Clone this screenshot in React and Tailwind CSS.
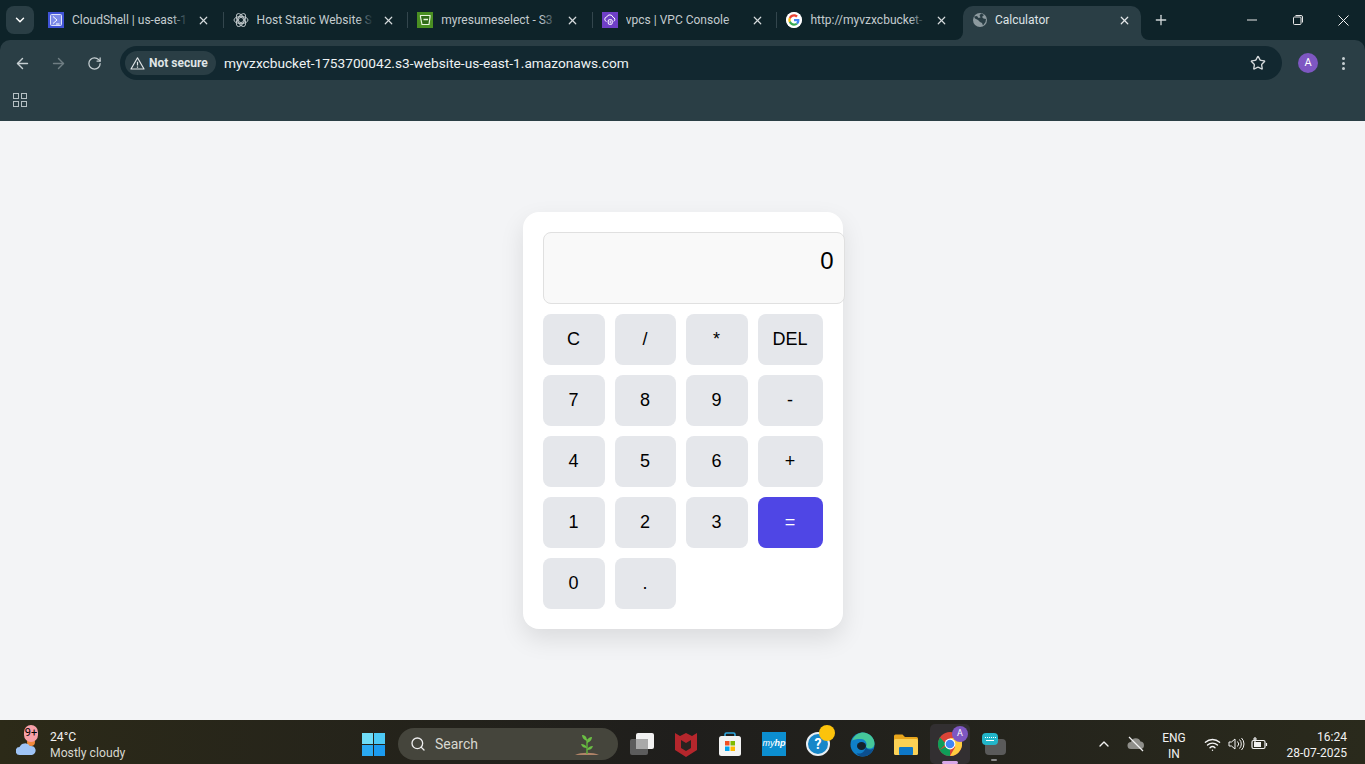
import React from 'react';
import { ChevronDown, ChevronUp, X, Plus, ArrowLeft, ArrowRight, RotateCw, Star, Search, Wifi } from 'lucide-react';

const GoogleIcon = () => (
  <svg width="16" height="16" viewBox="0 0 48 48" className="rounded-full bg-white">
    <circle cx="24" cy="24" r="24" fill="#fff" />
    <g transform="translate(7 7) scale(0.71)">
      <path fill="#EA4335" d="M24 9.5c3.5 0 6.6 1.2 9.1 3.6l6.8-6.8C35.8 2.4 30.4 0 24 0 14.6 0 6.5 5.4 2.6 13.2l7.9 6.2C12.4 13.7 17.7 9.5 24 9.5z" />
      <path fill="#4285F4" d="M46.9 24.5c0-1.6-.1-3.1-.4-4.5H24v9h12.9c-.6 3-2.2 5.5-4.7 7.2l7.7 6c4.5-4.2 7-10.300 7-17.700z" />
      <path fill="#FBBC05" d="M10.500 28.600c-.5-1.500-.8-3-.8-4.600s.3-3.100.8-4.600l-7.900-6.200C.9 16.500 0 20.100 0 24s.9 7.500 2.600 10.800l7.900-6.200z" />
      <path fill="#34A853" d="M24 48c6.500 0 11.900-2.100 15.900-5.800l-7.700-6c-2.200 1.400-4.900 2.300-8.200 2.300-6.300 0-11.600-4.200-13.500-9.900l-7.900 6.200C6.500 42.600 14.600 48 24 48z" />
    </g>
  </svg>
);

const CloudShellIcon = () => (
  <svg width="16" height="16" viewBox="0 0 16 16">
    <rect width="16" height="16" fill="#4053d6" />
    <rect x="2.500" y="2.500" width="11" height="11" rx="1" fill="#7d8be8" stroke="#dfe3fa" strokeWidth="1" />
    <path d="M5 4.500 9 8l-4 3.500M8 12h3.500" fill="none" stroke="#fff" strokeWidth="1" />
  </svg>
);

const OpenAiIcon = () => (
  <svg width="16" height="16" viewBox="0 0 16 16" fill="none" stroke="#c9d0d3" strokeWidth="0.900">
    <circle cx="8" cy="8" r="2.600" />
    <ellipse cx="8" cy="8" rx="7" ry="3.600" />
    <ellipse cx="8" cy="8" rx="7" ry="3.600" transform="rotate(60 8 8)" />
    <ellipse cx="8" cy="8" rx="7" ry="3.600" transform="rotate(120 8 8)" />
  </svg>
);

const S3Icon = () => (
  <svg width="16" height="16" viewBox="0 0 16 16">
    <rect width="16" height="16" fill="#4a8f22" />
    <path d="M3.500 3.500h9.500v1.500l-1 7.500H5L3.500 5z" fill="#2f6a17" stroke="#e8f5dc" strokeWidth="1.200" />
    <path d="M6.500 7.500H11" stroke="#e8f5dc" strokeWidth="1.500" />
  </svg>
);

const VpcIcon = () => (
  <svg width="16" height="16" viewBox="0 0 16 16">
    <rect width="16" height="16" fill="#6f3fc7" />
    <path d="M4.500 9.500a2.300 2.300 0 0 1 .2-4.500 3.300 3.300 0 0 1 6.300.4 2.100 2.100 0 0 1 .6 4" fill="none" stroke="#fff" strokeWidth="1" />
    <rect x="6.200" y="7.500" width="4" height="5" rx="1.500" fill="none" stroke="#fff" strokeWidth="1" />
    <path d="M8.200 8.500v3" stroke="#fff" strokeWidth="1" />
  </svg>
);

const GlobeIcon = () => (
  <svg width="16" height="16" viewBox="0 0 16 16">
    <circle cx="8" cy="8" r="7" fill="#8d9a9f" />
    <path d="M2 4.500 5 4l1.500 2 2-.5L7.500 3l2-1.500L12 3l-2 2 1.500 1.500 2.500.5-.5 3-2.500 3.500-1-2.500-2-1L6 8 3 6.500z" fill="#2a3e45" />
  </svg>
);

const tabs = [
  { title: 'CloudShell | us-east-1', icon: <CloudShellIcon /> },
  { title: 'Host Static Website S', icon: <OpenAiIcon /> },
  { title: 'myresumeselect - S3', icon: <S3Icon /> },
  { title: 'vpcs | VPC Console', icon: <VpcIcon /> },
  { title: 'http://myvzxcbucket-', icon: <GoogleIcon />, last: true },
];

const keys = [
  ['C', '/', '*', 'DEL'],
  ['7', '8', '9', '-'],
  ['4', '5', '6', '+'],
  ['1', '2', '3', '='],
  ['0', '.'],
];

const Tab = ({ title, icon, last }) => (
  <div className="relative flex h-[34px] w-[184.6px] shrink-0 items-center pb-[6px] pl-2">
    {icon}
    <div className="relative ml-2 w-[116px] overflow-hidden whitespace-nowrap text-xs text-[#c4cccf]">
      {title}
      <div className="absolute inset-y-0 right-0 w-4 bg-gradient-to-r from-transparent to-[#0e2329]" />
    </div>
    <X size={13} strokeWidth={2.200} className="ml-[9px] text-[#d5dadc]" />
    {!last && <div className="absolute right-[1px] top-[6px] h-4 w-px bg-[#33464d]" />}
  </div>
);

const Key = ({ label }) => {
  const isEquals = label === '=';
  return (
    <button
      className={`flex h-[51px] items-center justify-center rounded-lg pb-[2px] text-lg ${
        isEquals ? 'bg-[#4f46e5] text-white' : 'bg-[#e5e7eb] text-black'
      }`}
    >
      {label}
    </button>
  );
};

const Slot = ({ children }) => (
  <div className="flex h-10 w-11 shrink-0 items-center justify-center">{children}</div>
);

const TaskbarIcons = () => (
  <div className="flex items-center">
    <Slot>
      <svg width="26" height="26" viewBox="0 0 26 26">
        <rect x="1" y="8" width="18" height="16" rx="2" fill="#5c5c5c" />
        <rect x="7" y="2" width="18" height="16" rx="2" fill="#f1f1f1" />
        <rect x="7" y="8" width="12" height="10" fill="#a9a9a9" />
      </svg>
    </Slot>
    <Slot>
      <svg width="24" height="26" viewBox="0 0 24 26">
        <path d="M1 2l5 3 6-3 6 3 5-3v17l-11 7-11-7z" fill="#b5262c" />
        <path d="M7 9l5 3 5-3v8l-5 3-5-3z" fill="#2a2320" />
      </svg>
    </Slot>
    <Slot>
      <svg width="24" height="26" viewBox="0 0 24 26">
        <path d="M7 6V3.500A1.500 1.500 0 0 1 8.500 2h7A1.500 1.500 0 0 1 17 3.500V6" fill="none" stroke="#2fa8e0" strokeWidth="1.600" />
        <rect x="1" y="5" width="22" height="20" rx="2.500" fill="#f3f3f3" />
        <rect x="7" y="10" width="4.500" height="4.500" fill="#f25022" />
        <rect x="12.500" y="10" width="4.500" height="4.500" fill="#7fba00" />
        <rect x="7" y="15.500" width="4.500" height="4.500" fill="#00a4ef" />
        <rect x="12.500" y="15.500" width="4.500" height="4.500" fill="#ffb900" />
      </svg>
    </Slot>
    <Slot>
      <div className="flex h-6 w-6 items-center justify-center bg-[#0c8ed0] font-['Liberation_Sans',sans-serif] text-[9px] italic text-white">
        my<span className="font-bold">hp</span>
      </div>
    </Slot>
    <Slot>
      <div className="relative h-6 w-6">
        <div className="flex h-6 w-6 items-center justify-center rounded-full border-2 border-[#e8eef2] bg-[#1687c9] text-sm font-bold text-white">?</div>
        <div className="absolute -right-[5px] -top-[7px] h-4 w-4 rounded-full bg-[#fcc30b]" />
      </div>
    </Slot>
    <Slot>
      <svg width="25" height="25" viewBox="0 0 25 25">
        <circle cx="12.500" cy="12.500" r="12" fill="#0f7fc9" />
        <path d="M2 9C4 2.500 10 .500 13 .500c6 0 11.500 5 11.500 11 0 3-2 5-5 5-2.500 0-3.500-1-3.500-2 2-3-1-8-5.500-7.500C7 7 3 7.500 2 9z" fill="#45c79a" />
        <path d="M16 14.500c0 1.500 1.500 3 4 3 1.500 0 2.500-.5 3.500-1-1.500 5-6 8-11 8-3 0-5-1.500-6-3.500 3 1.500 8 .5 9.500-6.500z" fill="#0c4f8f" />
        <ellipse cx="11.500" cy="14" rx="4.500" ry="4" fill="#14202c" />
      </svg>
    </Slot>
    <Slot>
      <svg width="24" height="24" viewBox="0 0 24 24">
        <path d="M0 4a1.500 1.500 0 0 1 1.500-1.500h7L11 5h11.500A1.500 1.500 0 0 1 24 6.500V10H0z" fill="#e9a61c" />
        <rect y="7" width="24" height="16" rx="1.500" fill="#fbd155" />
        <rect x="5" y="15" width="14" height="8" rx="1" fill="#0e78c8" />
      </svg>
    </Slot>
    <div className="flex h-10 w-11 shrink-0 items-center justify-center">
      <div className="relative flex h-10 w-10 items-center justify-center rounded-[5px] bg-[#322f31]">
        <svg width="24" height="24" viewBox="0 0 24 24">
          <circle cx="12" cy="12" r="12" fill="#db4437" />
          <path d="M12 12 1.600 18A12 12 0 0 0 12 24z" fill="#0f9d58" />
          <path d="M1.600 18A12 12 0 0 1 2 5.500L8 12z" fill="#0f9d58" />
          <path d="M12 6h10.400A12 12 0 0 1 12 24l5.200-9z" fill="#ffcd40" />
          <circle cx="12" cy="12" r="5.400" fill="#fff" />
          <circle cx="12" cy="12" r="4.300" fill="#4285f4" />
        </svg>
        <div className="absolute right-[2px] top-[2px] flex h-4 w-4 items-center justify-center rounded-full bg-[#7e57c2] text-[9px] text-white">A</div>
        <div className="absolute bottom-0 h-[3px] w-4 rounded-full bg-[#d9a7e8]" />
      </div>
    </div>
    <Slot>
      <div className="relative h-[22px] w-6">
        <div className="absolute bottom-0 right-0 h-4 w-[21px] rounded-sm bg-[#5a5a5a]" />
        <div className="absolute left-0 top-0 flex h-3 w-4 flex-col items-center justify-center gap-[2px] rounded-sm bg-[#22b5c9]">
          <span className="h-px w-[11px] border-t border-dotted border-white" />
          <span className="h-px w-[8px] bg-white" />
        </div>
        <div className="absolute -bottom-[6px] left-[9px] h-[2px] w-[6px] rounded bg-[#8b8b8b]" />
      </div>
    </Slot>
  </div>
);

export default function App() {
  return (
    <div className="flex h-screen w-full flex-col overflow-hidden bg-[#0e2329] font-['Roboto',sans-serif]">
      {/* browser chrome */}
      <div className="flex h-10 shrink-0 items-end">
        <div className="mb-[6px] ml-[6px] flex h-7 w-7 shrink-0 items-center justify-center rounded-lg bg-[#2a3e45]">
          <ChevronDown size={14} strokeWidth={2.500} className="text-white" />
        </div>
        <div className="w-[6px] shrink-0" />
        {tabs.map((tab) => (
          <Tab key={tab.title} title={tab.title} icon={tab.icon} last={tab.last} />
        ))}
        <div className="relative flex h-[34px] w-[178px] shrink-0 items-center rounded-t-[10px] bg-[#2a3e45] pb-[6px] pl-[9px]">
          <GlobeIcon />
          <span className="ml-[7px] w-[123px] text-xs text-[#dfe4e6]">Calculator</span>
          <X size={13} strokeWidth={2.200} className="text-[#e4e8ea]" />
          <div className="absolute -left-[8px] bottom-0 h-2 w-2 bg-[#2a3e45]">
            <div className="h-2 w-2 rounded-br-lg bg-[#0e2329]" />
          </div>
          <div className="absolute -right-[8px] bottom-0 h-2 w-2 bg-[#2a3e45]">
            <div className="h-2 w-2 rounded-bl-lg bg-[#0e2329]" />
          </div>
        </div>
        <div className="flex h-[34px] w-[40px] shrink-0 items-center justify-center pb-[6px]">
          <Plus size={16} strokeWidth={2} className="text-[#cfd6d8]" />
        </div>
        <div className="ml-auto flex h-10 items-center text-white">
          <div className="flex w-[46px] justify-center">
            <svg width="10" height="10" viewBox="0 0 10 10"><path d="M0 5h10" stroke="#e8e8e8" strokeWidth="1" /></svg>
          </div>
          <div className="flex w-[46px] justify-center">
            <svg width="10" height="10" viewBox="0 0 10 10" fill="none" stroke="#e8e8e8" strokeWidth="1">
              <rect x="0.500" y="2" width="7.500" height="7.500" rx="1" />
              <path d="M2.500 .500h5.500a1.500 1.500 0 0 1 1.500 1.500v5.500" />
            </svg>
          </div>
          <div className="flex w-[44px] justify-center">
            <svg width="11" height="11" viewBox="0 0 11 11"><path d="M.500.500l10 10M10.500.500l-10 10" stroke="#f2f2f2" strokeWidth="1" /></svg>
          </div>
        </div>
      </div>

      <div className="flex h-[46px] shrink-0 items-center rounded-t-[10px] bg-[#2a3e45] text-[#c6cfd2]">
        <div className="flex w-[120px] shrink-0 items-center">
          <div className="flex w-11 justify-center"><ArrowLeft size={17} strokeWidth={2} /></div>
          <div className="ml-[-8px] flex w-11 justify-center text-[#6f7e83]"><ArrowRight size={17} strokeWidth={2} /></div>
          <div className="ml-[-8px] flex w-11 justify-center"><RotateCw size={15} strokeWidth={2} /></div>
        </div>
        <div className="flex h-[34px] w-[1162px] shrink-0 items-center rounded-full bg-[#122830] pl-[5px] pr-[16px]">
          <div className="flex h-6 w-[91px] shrink-0 items-center gap-1 rounded-full bg-[#2a3e45] pl-[5px] text-xs font-bold text-[#dfe4e6]">
            <svg width="15" height="15" viewBox="0 0 15 15" fill="none" stroke="#dfe4e6" strokeWidth="1.200">
              <path d="M7.500 1.800 14 13H1z" strokeLinejoin="round" />
              <path d="M7.500 5.800v3.800M7.500 10.500v1.200" />
            </svg>
            Not secure
          </div>
          <span className="ml-2 text-[13.7px] text-[#eef2f3]">myvzxcbucket-1753700042.s3-website-us-east-1.amazonaws.com</span>
          <Star size={16} strokeWidth={2} className="ml-auto text-[#d5dadc]" />
        </div>
        <div className="ml-4 flex h-5 w-5 shrink-0 items-center justify-center rounded-full bg-[#7e57c2] text-[11px] text-white">A</div>
        <div className="ml-[24px] flex shrink-0 flex-col gap-[2px]">
          <span className="h-[3px] w-[3px] rounded-full bg-[#c6cfd2]" />
          <span className="h-[3px] w-[3px] rounded-full bg-[#c6cfd2]" />
          <span className="h-[3px] w-[3px] rounded-full bg-[#c6cfd2]" />
        </div>
      </div>

      <div className="flex h-[35px] shrink-0 items-start bg-[#2a3e45] pl-[13px] pt-[7px]">
        <div className="grid grid-cols-[6px_6px] gap-[2px]">
          <span className="h-[6px] w-[6px] border border-[#b5bfc3]" />
          <span className="h-[6px] w-[6px] border border-[#b5bfc3]" />
          <span className="h-[6px] w-[6px] border border-[#b5bfc3]" />
          <span className="h-[6px] w-[6px] border border-[#b5bfc3]" />
        </div>
      </div>

      {/* calculator page */}
      <main className="flex flex-1 items-center justify-center bg-[#f3f4f6] font-['Liberation_Sans',sans-serif]">
        <div className="w-[320px] rounded-2xl bg-white p-5 shadow-[0_10px_25px_rgba(0,0,0,0.1)]">
          <div className="mb-[10px] flex h-[72px] w-[302px] items-center justify-end rounded-lg border border-[#e0e0e0] bg-[#f9f9f9] px-[10px] pb-[14px] text-2xl text-black">
            0
          </div>
          <div className="grid grid-cols-[62px_61px_62px_65px] gap-[10px]">
            {keys.flat().map((k) => (
              <Key key={k} label={k} />
            ))}
          </div>
        </div>
      </main>

      {/* taskbar */}
      <footer className="flex h-11 shrink-0 items-center bg-gradient-to-r from-[#2c2a18] via-[#1f1e1c] to-[#2a2a1c] pt-1 text-[#f2f2f2]">
        <div className="relative flex w-[351px] shrink-0 items-center pl-4">
          <svg width="20" height="18" viewBox="0 0 20 18" className="mt-[6px]">
            <circle cx="15" cy="4" r="4" fill="#f08a3c" />
            <path d="M4 17a4 4 0 0 1-.5-8A6 6 0 0 1 14 8a4.500 4.500 0 0 1 2 9z" fill="#9fc4f5" />
          </svg>
          <div className="absolute left-6 top-[-2px] flex h-[17px] w-[14px] items-center justify-center rounded-full bg-[#f8a0a8] text-[11px] text-black">9+</div>
          <div className="ml-[14px] mt-[2px] text-[12.2px] leading-4">
            <div>24°C</div>
            <div className="text-[#d8d8d0]">Mostly cloudy</div>
          </div>
        </div>
        <Slot>
          <div className="grid grid-cols-2 gap-px">
            <span className="h-[11px] w-[11px] bg-[#6fdcf7]" />
            <span className="h-[11px] w-[11px] bg-[#4cc9f5]" />
            <span className="h-[11px] w-[11px] bg-[#2aa9f2]" />
            <span className="h-[11px] w-[11px] bg-[#1b9bf0]" />
          </div>
        </Slot>
        <div className="ml-[3px] flex h-8 w-[220px] shrink-0 items-center rounded-full bg-[#45453c] pl-3 pr-[18px] text-sm text-[#d8d8d0]">
          <Search size={16} strokeWidth={2} className="text-[#eeeeee]" />
          <span className="ml-[9px]">Search</span>
          <svg width="26" height="26" viewBox="0 0 26 26" className="ml-auto">
            <path d="M1 24c6-3 18-3 24 0z" fill="#b08468" />
            <path d="M13 23V8" stroke="#5fae3a" strokeWidth="1.500" />
            <path d="M13 10C10 9 8 7 8 4c3 0 5 2 5 6zM13 12c3-1 5-3 5-6-3 0-5 2-5 6zM13 17c-3 0-5-1-6-4 3 0 5 1 6 4zM13 19c3 0 5-1 6-4-3 0-5 1-6 4z" fill="#6bbf44" />
          </svg>
        </div>
        <div className="w-[2px] shrink-0" />
        <TaskbarIcons />
        <div className="ml-auto flex items-center pr-[18px]">
          <ChevronUp size={16} strokeWidth={2} className="text-[#f2f2f2]" />
          <svg width="18" height="16" viewBox="0 0 18 16" className="ml-[15px]">
            <path d="M4 13a3.500 3.500 0 0 1 0-7 5 5 0 0 1 9.500-.5A3.800 3.800 0 0 1 14 13z" fill="#8f8f8a" />
            <path d="M2 1l14 14" stroke="#f2f2f2" strokeWidth="1.200" />
          </svg>
          <div className="ml-[9px] mt-1 w-[40px] text-center text-xs leading-4">
            <div>ENG</div>
            <div>IN</div>
          </div>
          <Wifi size={17} strokeWidth={2} className="ml-[10px]" />
          <svg width="17" height="16" viewBox="0 0 17 16" fill="none" stroke="#f2f2f2" strokeWidth="1" className="ml-[7px]">
            <path d="M1 6v4h2.500L7 13V3L3.500 6z" />
            <path d="M9.500 5.500a3.500 3.500 0 0 1 0 5M11.500 3.500a6.500 6.500 0 0 1 0 9M13.500 2a8.500 8.500 0 0 1 0 12" />
          </svg>
          <svg width="17" height="16" viewBox="0 0 17 16" fill="none" stroke="#f2f2f2" strokeWidth="1.200" className="ml-[6px]">
            <rect x="1" y="4.500" width="13" height="8" rx="1.500" />
            <path d="M15.500 7v3" />
            <path d="M3 6h7v5H3z" fill="#f2f2f2" stroke="none" />
            <path d="M4 1v5M2 3h4" />
          </svg>
          <div className="ml-[12px] mt-[2px] w-[67px] text-right text-xs leading-4">
            <div>16:24</div>
            <div>28-07-2025</div>
          </div>
        </div>
      </footer>
    </div>
  );
}
